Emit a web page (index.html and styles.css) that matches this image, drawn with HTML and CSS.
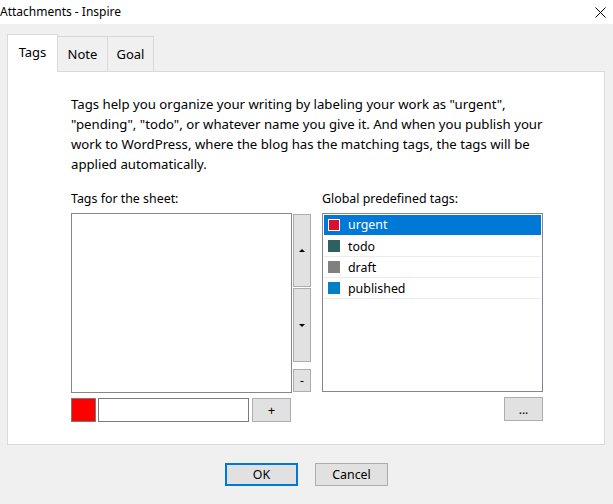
FILE: index.html
```html
<!DOCTYPE html>
<html>
<head>
<meta charset="utf-8">
<link rel="stylesheet" href="styles.css">
</head>
<body>
<div class="window">
  <div class="titlebar">
    <span class="title">Attachments - Inspire</span>
    <svg class="close" width="11" height="11" viewBox="0 0 11 11"><path d="M0.5 0.5 L10.5 10.5 M10.5 0.5 L0.5 10.5" stroke="#000" stroke-width="1" fill="none"/></svg>
  </div>
  <div class="content">
    <div class="tabs">
      <div class="tab active">Tags</div>
      <div class="tab">Note</div>
      <div class="tab">Goal</div>
    </div>
    <div class="panel">
      <p class="desc">Tags help you organize your writing by labeling your work as "urgent", "pending", "todo", or whatever name you give it. And when you publish your work to WordPress, where the blog has the matching tags, the tags will be applied automatically.</p>
      <div class="columns">
        <div class="col left">
          <div class="label">Tags for the sheet:</div>
          <div class="listrow">
            <div class="listbox sheet"></div>
            <div class="sidebtns">
              <div class="btn side up"><span class="tri up-tri"></span></div>
              <div class="btn side down"><span class="tri down-tri"></span></div>
              <div class="btn side minus">-</div>
            </div>
          </div>
          <div class="addrow">
            <div class="colorpick"></div>
            <div class="textinput"></div>
            <div class="btn plus">+</div>
          </div>
        </div>
        <div class="col right">
          <div class="label">Global predefined tags:</div>
          <div class="listbox global">
            <div class="item selected"><span class="sw" style="background:#dc0f2e"></span>urgent</div>
            <div class="item"><span class="sw" style="background:#2f5f5f"></span>todo</div>
            <div class="item"><span class="sw" style="background:#808080"></span>draft</div>
            <div class="item"><span class="sw" style="background:#0080c4"></span>published</div>
          </div>
          <div class="morerow">
            <div class="btn more">...</div>
          </div>
        </div>
      </div>
    </div>
    <div class="footer">
      <div class="btn dlg ok">OK</div>
      <div class="btn dlg">Cancel</div>
    </div>
  </div>
</div>
</body>
</html>
```
FILE: styles.css
```css
* { box-sizing: border-box; }
html, body { margin: 0; padding: 0; }
body {
  width: 613px;
  height: 504px;
  overflow: hidden;
  font-family: "Noto Sans", "Liberation Sans", sans-serif;
  font-size: 12px;
  color: #000;
  background: #f0f0f0;
}
.titlebar {
  height: 24px;
  background: #fff;
  display: flex;
  align-items: center;
  justify-content: space-between;
  padding: 0 7px 2px 0;
}
.title { font-size: 12px; }
.close { display: block; margin-top: 2px; }
.content {
  padding: 10px 8px 0 7px;
}
.tabs {
  display: flex;
  align-items: flex-end;
  height: 37px;
  position: relative;
  z-index: 1;
}
.tab {
  height: 35px;
  border: 1px solid #d9d9d9;
  border-bottom: none;
  border-left: none;
  background: #f0f0f0;
  font-size: 13px;
  display: flex;
  align-items: center;
  justify-content: center;
}
.tab:nth-child(2) { width: 50px; }
.tab:nth-child(3) { width: 46px; }
.tab.active {
  width: 51px;
  height: 38px;
  border-left: 1px solid #d9d9d9;
  background: #fff;
  margin-bottom: -1px;
  padding-bottom: 3px;
}
.panel {
  background: #fff;
  border: 1px solid #d9d9d9;
  height: 374px;
  padding: 22px 0 0 63px;
}
.desc {
  margin: 0;
  width: 478px;
  font-size: 13.2px;
  line-height: 20px;
}
.columns {
  display: flex;
  margin-top: 15px;
}
.label { line-height: 20px; margin-bottom: 4px; font-size: 12.4px; }
.col.left { width: 251px; }
.listrow { display: flex; }
.listbox {
  background: #fff;
  border: 1px solid #828790;
}
.listbox.sheet { width: 221px; height: 180px; }
.sidebtns {
  display: flex;
  flex-direction: column;
  margin-left: 1px;
  padding-top: 1px;
}
.btn {
  background: #e1e1e1;
  border: 1px solid #adadad;
  display: flex;
  align-items: center;
  justify-content: center;
}
.btn.side { width: 18px; }
.btn.up { height: 73px; }
.btn.down { height: 74px; margin-top: 1px; }
.btn.minus { height: 23px; margin-top: 7px; font-size: 12px; }
.tri { width: 0; height: 0; border-left: 3px solid transparent; border-right: 3px solid transparent; }
.up-tri { border-bottom: 3px solid #000; }
.down-tri { border-top: 3px solid #000; }
.addrow {
  display: flex;
  align-items: center;
  margin-top: 5px;
  height: 24px;
}
.colorpick {
  width: 25px;
  height: 24px;
  background: #ff0000;
  border: 1px solid #7a7a7a;
}
.textinput {
  width: 151px;
  height: 24px;
  margin-left: 2px;
  border: 1px solid #7a7a7a;
  background: #fff;
}
.btn.plus {
  width: 39px;
  height: 24px;
  margin-left: 3px;
  font-size: 13px;
}
.col.right { width: 221px; }
.listbox.global {
  width: 221px;
  height: 179px;
  padding: 1px;
}
.item {
  height: 21px;
  display: flex;
  align-items: center;
  padding-left: 4px;
  border-bottom: 1px solid #ececec;
  font-size: 12.4px;
}
.item.selected {
  background: #0078d7;
  color: #fff;
  border-bottom-color: #0078d7;
  height: 20px;
  margin-bottom: 1px;
}
.sw {
  width: 12px;
  height: 12px;
  margin-right: 8px;
  flex: none;
}
.item.selected .sw { border: 1px solid #fff; }
.morerow {
  display: flex;
  justify-content: flex-end;
  margin-top: 5px;
}
.btn.more {
  width: 39px;
  height: 24px;
  align-items: flex-end;
  padding-bottom: 4px;
  line-height: 12px;
}
.footer {
  display: flex;
  justify-content: center;
  gap: 17px;
  margin-top: 18px;
  padding-left: 1px;
}
.btn.dlg {
  width: 73px;
  height: 23px;
  font-size: 12.4px;
}
.btn.ok { border: 2px solid #0078d7; }
```
